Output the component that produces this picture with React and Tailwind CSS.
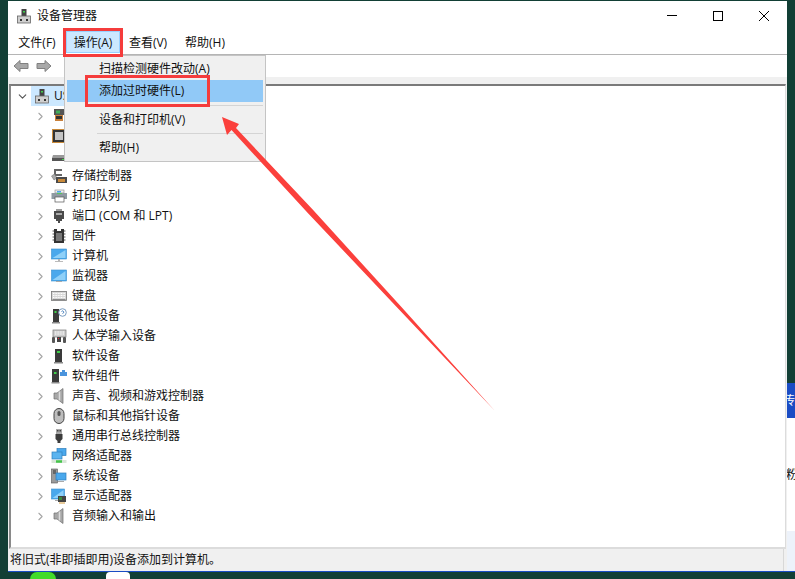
import { ChevronDown, ChevronRight } from 'lucide-react';

const Tower = ({ c = '#3a3a3a' }) => (
  <>
    <rect x="4" y="1" width="7" height="13" fill={c} />
    <rect x="6" y="3" width="3" height="2" fill="#3fd14a" />
    <rect x="3" y="14" width="9" height="1.5" fill="#8a8a8a" />
  </>
);

const Screen = ({ x = 1, y = 2, w = 14, h = 10 }) => (
  <>
    <rect x={x} y={y} width={w} height={h} fill="#4aa8ec" stroke="#3a8fd0" strokeWidth=".6" />
    <path d={`M${x + 1} ${y + h - 1}L${x + w - 1} ${y + 1}V${y + h - 1}Z`} fill="#8fd0f8" />
  </>
);

const icons = {
  computerRoot: (
    <>
      <rect x="5.5" y="1" width="5" height="7" fill="#444" />
      <rect x="7" y="3" width="2" height="1.5" fill="#3fd14a" />
      <rect x="1.5" y="8" width="13" height="7" fill="#cfcfcf" stroke="#666" strokeWidth=".8" />
      <rect x="4" y="11" width="2" height="2" fill="#333" />
      <rect x="10" y="11" width="2" height="2" fill="#333" />
    </>
  ),
  net: (
    <>
      <rect x="3" y="1" width="11" height="6" fill="#555" />
      <rect x="5" y="2.5" width="4" height="3" fill="#3fae5a" />
      <path d="M4 7h8v6H4z" fill="#c9803a" />
      <rect x="5" y="8" width="6" height="3" fill="#333" />
    </>
  ),
  chip: (
    <>
      <rect x="1" y="1" width="14" height="14" fill="#c98a3a" />
      <rect x="2" y="2" width="12" height="12" fill="#333" />
      <rect x="4" y="4" width="8" height="8" fill="#c4c4c4" />
    </>
  ),
  disk: (
    <>
      <path d="M2 7h12l1 3v3H1v-3z" fill="#9a9a9a" />
      <rect x="1" y="10" width="14" height="3" fill="#555" />
      <rect x="11" y="11" width="2" height="1" fill="#45d14f" />
    </>
  ),
  storage: (
    <>
      <path d="M3 1h8v2H5v3h6v2H3z" fill="#666" />
      <path d="M0.500 8l3-2 2.500 4-3 2z" fill="#aaa" stroke="#666" strokeWidth=".5" />
      <rect x="5" y="9" width="11" height="6" fill="#4a4a4a" />
      <rect x="7" y="11" width="7" height="3" fill="#c98a3a" />
    </>
  ),
  printer: (
    <>
      <rect x="4" y="2" width="9" height="3" fill="#eee" stroke="#888" strokeWidth=".6" />
      <rect x="0.500" y="5" width="16" height="6" fill="#8f9aa3" />
      <rect x="6" y="3" width="4" height="1.500" fill="#4aa8ec" />
      <rect x="6" y="5" width="5" height="1" fill="#58c65a" />
      <rect x="4" y="9" width="9" height="5" fill="#fff" stroke="#555" strokeWidth=".7" />
    </>
  ),
  port: (
    <>
      <path d="M3 3h10v8h-2v2H9v2H7v-2H5v-2H3z" fill="#4a4a4a" />
      <rect x="5" y="1" width="6" height="2" fill="#999" />
      <rect x="5" y="5" width="6" height="2" fill="#aaa" />
    </>
  ),
  firmware: (
    <>
      <path d="M3 1h3v2h4V1h3v14H3z" fill="#333" />
      <rect x="5" y="5" width="6" height="8" fill="#777" />
      <path d="M1.500 3h1.500M1.500 6h1.500M1.500 9h1.500M1.500 12h1.500M13 3h1.500M13 6h1.500M13 9h1.500M13 12h1.500" stroke="#555" />
    </>
  ),
  computer: (
    <>
      <Screen x={0.5} y={1} w={15} h={10} />
      <rect x="7" y="11" width="2" height="2" fill="#b5b5b5" />
      <rect x="4" y="13" width="8" height="1" fill="#bbb" />
    </>
  ),
  monitor: (
    <>
      <Screen x={0.5} y={2} w={15} h={11} />
      <rect x="5" y="13" width="6" height="1" fill="#aaa" />
    </>
  ),
  keyboard: (
    <>
      <rect x="0.500" y="3.500" width="15" height="9" fill="#d8d8d8" stroke="#777" strokeWidth=".8" />
      <path d="M2 5.500h12M2 7.500h12M2 9.500h12" stroke="#fff" strokeDasharray="1 .6" />
      <rect x="1.500" y="11" width="13" height="1" fill="#8a8a8a" />
    </>
  ),
  other: (
    <>
      <rect x="2" y="1" width="6" height="13" fill="#3a3a3a" />
      <rect x="3.500" y="3" width="2" height="2" fill="#3fd14a" />
      <rect x="1" y="14" width="8" height="1.500" fill="#8a8a8a" />
      <circle cx="11.500" cy="4.500" r="3.800" fill="#fff" stroke="#7a9cc0" />
      <path d="M10.500 3.500q1-1.200 2 0t-1 2" fill="none" stroke="#2d6fb5" strokeWidth=".9" />
    </>
  ),
  hid: (
    <>
      <rect x="2" y="2" width="13" height="7" fill="#cfcfcf" stroke="#777" strokeWidth=".7" />
      <path d="M4 4h9M4 6h9" stroke="#fff" strokeDasharray="1 .6" />
      <rect x="1" y="9" width="3" height="6" rx="1" fill="#555" />
      <rect x="12" y="9" width="3" height="6" rx="1" fill="#555" />
      <rect x="6" y="9" width="4" height="5" fill="#444" />
      <rect x="7" y="10" width="1" height="1" fill="#e23" />
    </>
  ),
  software: <Tower />,
  component: (
    <>
      <rect x="1" y="1" width="7" height="13" fill="#3a3a3a" />
      <rect x="3" y="4" width="2.500" height="2" fill="#3fd14a" />
      <rect x="0.500" y="14" width="8" height="1.500" fill="#8a8a8a" />
      <path d="M9 4h2V2h3v2h2v4H9z" fill="#4a94dd" />
    </>
  ),
  sound: (
    <>
      <path d="M3 5h3l6-4.500v15L6 11H3z" fill="#a8a8a8" stroke="#6e6e6e" strokeWidth=".7" />
      <path d="M8.500 3.500v9" stroke="#dcdcdc" strokeWidth="1.500" />
    </>
  ),
  mouse: (
    <>
      <rect x="3" y="0.500" width="10" height="15" rx="5" fill="#bdbdbd" stroke="#444" />
      <rect x="6.500" y="3" width="3" height="5" rx="1.500" fill="#555" />
    </>
  ),
  usb: (
    <>
      <rect x="5" y="1" width="6" height="5" fill="#a8a8a8" />
      <rect x="6" y="2" width="1.500" height="1.500" fill="#444" />
      <rect x="8.500" y="2" width="1.500" height="1.500" fill="#444" />
      <path d="M4.500 6h7v5l-2 2v2h-3v-2l-2-2z" fill="#3c3c3c" />
    </>
  ),
  network: (
    <>
      <rect x="6" y="0.500" width="9" height="7" fill="#4aa8ec" stroke="#2f7fbd" strokeWidth=".7" />
      <rect x="1" y="4" width="10" height="7" fill="#5bb4f0" stroke="#2f7fbd" strokeWidth=".7" />
      <rect x="0.500" y="12" width="15" height="3" fill="#d8e6d8" />
      <path d="M5 13.500h6" stroke="#45c44a" strokeWidth="2.500" />
    </>
  ),
  system: (
    <>
      <rect x="0.500" y="1" width="6" height="14" fill="#9a9a9a" stroke="#555" strokeWidth=".6" />
      <path d="M2 3h3M2 5h3" stroke="#333" />
      <rect x="5" y="5" width="10" height="7" fill="#4aa8ec" stroke="#2f7fbd" strokeWidth=".7" />
      <rect x="7" y="13" width="6" height="1" fill="#aaa" />
    </>
  ),
  display: (
    <>
      <Screen x={0.5} y={1} w={13} h={10} />
      <rect x="4" y="12" width="8" height="1" fill="#aaa" />
      <rect x="7" y="8" width="8" height="6" fill="#444" />
      <rect x="8" y="9" width="3" height="3" fill="#3c8a3c" />
      <path d="M8 15h6" stroke="#d49a3a" />
    </>
  ),
};

const rows = [
  { icon: 'net', label: '' },
  { icon: 'chip', label: '' },
  { icon: 'disk', label: '' },
  { icon: 'storage', label: '存储控制器' },
  { icon: 'printer', label: '打印队列' },
  { icon: 'port', label: '端口 (COM 和 LPT)' },
  { icon: 'firmware', label: '固件' },
  { icon: 'computer', label: '计算机' },
  { icon: 'monitor', label: '监视器' },
  { icon: 'keyboard', label: '键盘' },
  { icon: 'other', label: '其他设备' },
  { icon: 'hid', label: '人体学输入设备' },
  { icon: 'software', label: '软件设备' },
  { icon: 'component', label: '软件组件' },
  { icon: 'sound', label: '声音、视频和游戏控制器' },
  { icon: 'mouse', label: '鼠标和其他指针设备' },
  { icon: 'usb', label: '通用串行总线控制器' },
  { icon: 'network', label: '网络适配器' },
  { icon: 'system', label: '系统设备' },
  { icon: 'display', label: '显示适配器' },
  { icon: 'sound', label: '音频输入和输出' },
];

function DevIcon({ name, className = '' }) {
  return (
    <svg viewBox="0 0 16 16" className={`w-4 h-4 shrink-0 ${className}`}>
      {icons[name]}
    </svg>
  );
}

function ArrowIcon({ flip }) {
  return (
    <svg viewBox="0 0 16 14" className={`w-4 h-[14px] ${flip ? '-scale-x-100' : ''}`}>
      <path d="M1 7L7 1.500V4.500H15V9.500H7V12.500Z" fill="#a8a8a8" stroke="#808080" />
    </svg>
  );
}

function DeviceTree() {
  return (
    <div className="mx-px flex-1 min-h-0 border-l-2 border-t-2 border-r border-b-2 border-l-[#8a8a8a] border-t-[#7a7a7a] border-r-[#dcdcdc] border-b-[#dcdcdc] bg-white">
      <div className="flex items-center h-5">
        <ChevronDown size={13} strokeWidth={2} className="ml-[5px] text-[#555]" />
        <div className="ml-[2px] pl-[3px] flex items-center h-5 w-[130px] bg-[#cce8ff]">
          <DevIcon name="computerRoot" />
          <span className="ml-[4px]">USER-PC</span>
        </div>
      </div>
      {rows.map((row, i) => (
        <div key={i} className="flex items-center h-5">
          <ChevronRight size={13} strokeWidth={2} className="ml-[23px] text-[#a6a6a6]" />
          <DevIcon name={row.icon} className="ml-[4px]" />
          <span className="ml-[5px] whitespace-nowrap">{row.label}</span>
        </div>
      ))}
    </div>
  );
}

function ActionMenu() {
  return (
    <div className="absolute left-[56px] top-[54px] w-[202px] h-[107px] bg-[#f0f0f0] border border-[#c4c4c4] px-[2px] pt-[2px]">
      <div className="h-[22px] pl-[32px] flex items-center">扫描检测硬件改动(A)</div>
      <div className="h-[22px] pl-[32px] flex items-center bg-[#91c9f7]">添加过时硬件(L)</div>
      <div className="ml-[30px] mt-[3px] h-px bg-[#d4d4d4]" />
      <div className="h-[27px] pl-[32px] flex items-center">设备和打印机(V)</div>
      <div className="ml-[30px] h-px bg-[#d4d4d4]" />
      <div className="h-[27px] pl-[32px] flex items-center">帮助(H)</div>
    </div>
  );
}

export default function App() {
  return (
    <div className="relative w-[795px] h-[579px] overflow-hidden flex flex-col bg-[#123f35] text-[12px] leading-4 text-[#111] font-['Open_Sans','Noto_Sans_CJK_SC',sans-serif]">
      <div className="flex h-[571px] pt-px pl-2">
        {/* 设备管理器窗口 */}
        <div className="relative w-[779px] flex flex-col bg-white">
          <div className="h-[29px] flex items-center shrink-0">
            <svg viewBox="0 0 16 16" className="w-4 h-4 ml-[8px]">{icons.computerRoot}</svg>
            <span className="ml-[5px]">设备管理器</span>
            <div className="ml-auto flex">
              <div className="w-[46px] h-[29px] flex items-center justify-center">
                <div className="w-[10px] h-px bg-black" />
              </div>
              <div className="w-[46px] h-[29px] flex items-center justify-center">
                <div className="w-[10px] h-[10px] border border-black" />
              </div>
              <div className="w-[46px] h-[29px] flex items-center justify-center">
                <svg viewBox="0 0 10 10" className="w-[10px] h-[10px]">
                  <path d="M0 0L10 10M10 0L0 10" stroke="#000" strokeWidth="1" fill="none" />
                </svg>
              </div>
            </div>
          </div>

          <div className="h-6 flex items-center border-b border-[#b5b5b5] box-content shrink-0 pl-[3px]">
            <div className="w-[52px] h-[22px] pt-[2px] flex items-center justify-center">文件(F)</div>
            <div className="ml-[3px] w-[54px] h-[22px] pt-[2px] flex items-center justify-center bg-[#cce8ff] border border-[#99d1ff]">操作(A)</div>
            <div className="w-[54px] ml-[1px] h-[22px] pt-[2px] flex items-center justify-center">查看(V)</div>
            <div className="w-[56px] ml-[2px] h-[22px] pt-[2px] flex items-center justify-center">帮助(H)</div>
          </div>

          <div className="h-[22px] shrink-0 flex items-center pl-[5px] gap-[7px]">
            <ArrowIcon />
            <ArrowIcon flip />
            <div className="ml-[6px] w-px h-[18px] bg-[#a0a0a0]" />
          </div>

          <div className="flex-1 min-h-0 flex flex-col bg-[#f0f0f0] pt-[7px]">
            <DeviceTree />
            <div className="h-[22px] shrink-0 flex items-center pl-[2px] mr-[3px] border-r border-[#d8d8d8]">将旧式(非即插即用)设备添加到计算机。</div>
          </div>

          <ActionMenu />
        </div>

        {/* 右侧露出的其他窗口 */}
        <div className="w-2 overflow-hidden flex flex-col pt-[382px]">
          <div className="h-[35px] shrink-0 bg-[#1a4cc4] text-white flex items-center whitespace-nowrap -indent-[4px]">传</div>
          <div className="h-[113px] shrink-0 bg-white flex items-center whitespace-nowrap -indent-[1px]">粉</div>
          <div className="h-[40px] shrink-0 bg-[#edf2fa]" />
        </div>
      </div>

      {/* 任务栏 */}
      <div className="h-px bg-[#1a4cc4] ml-[8px]" />
      <div className="flex-1 relative overflow-hidden">
        <div className="absolute left-[30px] top-0 w-[26px] h-[14px] rounded-full bg-[#41dc2a]" />
        <div className="absolute left-[106px] top-0 w-[24px] h-[14px] rounded-sm bg-white" />
      </div>

      {/* 红色标注 */}
      <div className="absolute left-[63px] top-[28px] w-[60px] h-[29px] border-[3px] border-[#f53c3c]" />
      <div className="absolute left-[85px] top-[75px] w-[125px] h-[32px] border-[3px] border-[#f53c3c]" />
      <svg viewBox="0 0 795 579" className="absolute inset-0 w-[795px] h-[579px] pointer-events-none">
        <polygon points="222,117 239,124 236,128 312.200,209 401.200,306.800 495,411 398.800,309.200 307.800,213 231.500,130 227,135" fill="#fb403c" />
      </svg>
    </div>
  );
}
